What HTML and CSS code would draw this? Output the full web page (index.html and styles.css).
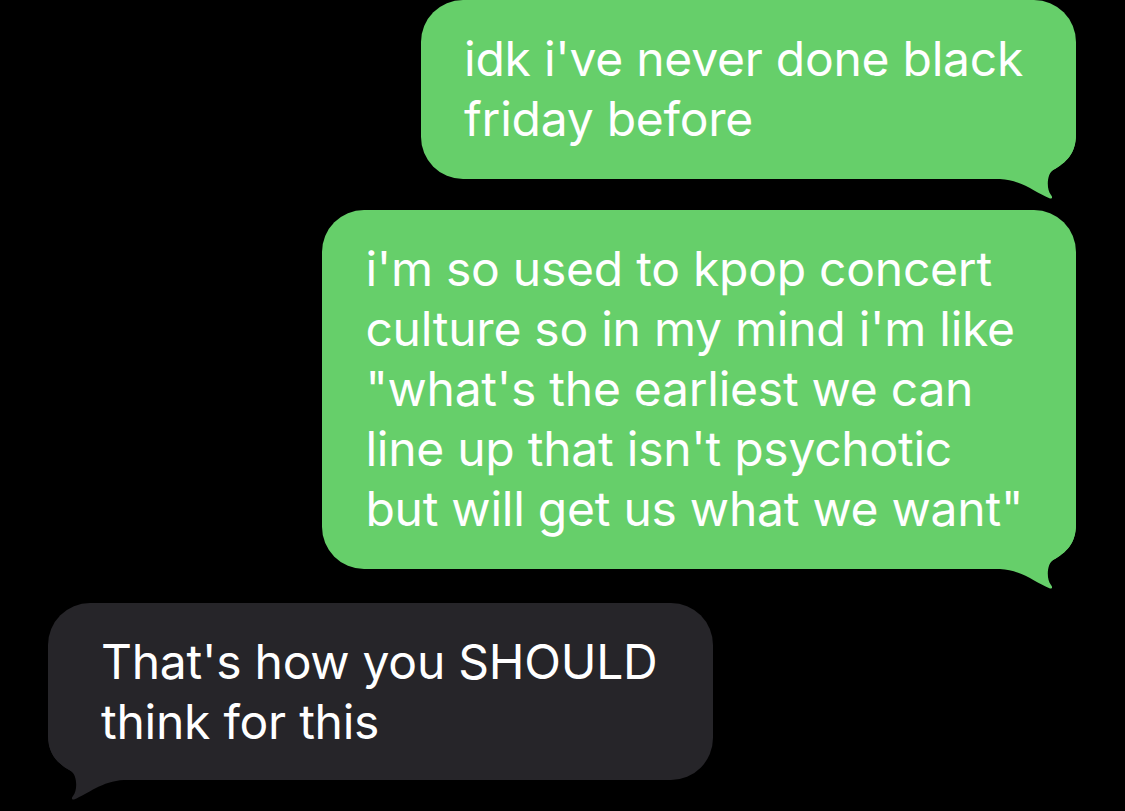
FILE: index.html
```html
<!DOCTYPE html>
<html lang="en">
<head>
    <meta charset="UTF-8">
    <meta name="viewport" content="width=device-width, initial-scale=1.0">
    <title>Messages</title>
    <link rel="stylesheet" href="styles.css">
</head>
<body>
    <div class="thread">
        <div class="bubble sent">
            <svg class="tail" viewBox="0 0 76 72"><path class="cut" d="M76 6C76 24 66 34 53 41C49 44 47.5 47 47.3 50H76Z"/><path class="fill" d="M0 0H76V6C76 24 66 34 53 41C47 45 46 60 51 66C53 68.5 52 70 50 69.5C36 64 22 51 0 50Z"/></svg>
            <span class="text">idk i've never done black<br>friday before</span>
        </div>
        <div class="bubble sent second">
            <svg class="tail" viewBox="0 0 76 72"><path class="cut" d="M76 6C76 24 66 34 53 41C49 44 47.5 47 47.3 50H76Z"/><path class="fill" d="M0 0H76V6C76 24 66 34 53 41C47 45 46 60 51 66C53 68.5 52 70 50 69.5C36 64 22 51 0 50Z"/></svg>
            <span class="text">i'm so used to kpop concert<br>culture so in my mind i'm like<br>"what's the earliest we can<br>line up that isn't psychotic<br>but will get us what we want"</span>
        </div>
        <div class="bubble received">
            <svg class="tail" viewBox="0 0 76 72"><path class="cut" d="M76 6C76 24 66 34 53 41C49 44 47.5 47 47.3 50H76Z"/><path class="fill" d="M0 0H76V6C76 24 66 34 53 41C47 45 46 60 51 66C53 68.5 52 70 50 69.5C36 64 22 51 0 50Z"/></svg>
            <span class="text">That's how you SHOULD<br>think for this</span>
        </div>
    </div>
</body>
</html>
```

FILE: styles.css
```css
body {
    margin: 0;
    background-color: #000;
    font-family: Inter, "Noto Sans", sans-serif;
}
.thread {
    display: flex;
    flex-direction: column;
    padding-bottom: 30px;
}
.bubble {
    position: relative;
    font-size: 48px;
    line-height: 60px;
    letter-spacing: -0.25px;
    color: #fff;
    border-radius: 42px;
    white-space: nowrap;
}
.text {
    position: relative;
}
.sent {
    align-self: flex-end;
    margin-right: 49px;
    padding: 29px 53px 30px 43px;
    background-color: #66cf6a;
}
.sent .tail .fill {
    fill: #66cf6a;
}
.second {
    margin-top: 31px;
}
.received {
    align-self: flex-start;
    margin-left: 48px;
    margin-top: 34px;
    padding: 29px 56px 28px 53px;
    background-color: #262529;
}
.received .tail .fill {
    fill: #262529;
}
.tail {
    position: absolute;
    bottom: -22px;
    width: 76px;
    height: 72px;
}
.tail .cut {
    fill: #000;
}
.sent .tail {
    right: 0;
}
.received .tail {
    left: 0;
    transform: scaleX(-1);
}
```
